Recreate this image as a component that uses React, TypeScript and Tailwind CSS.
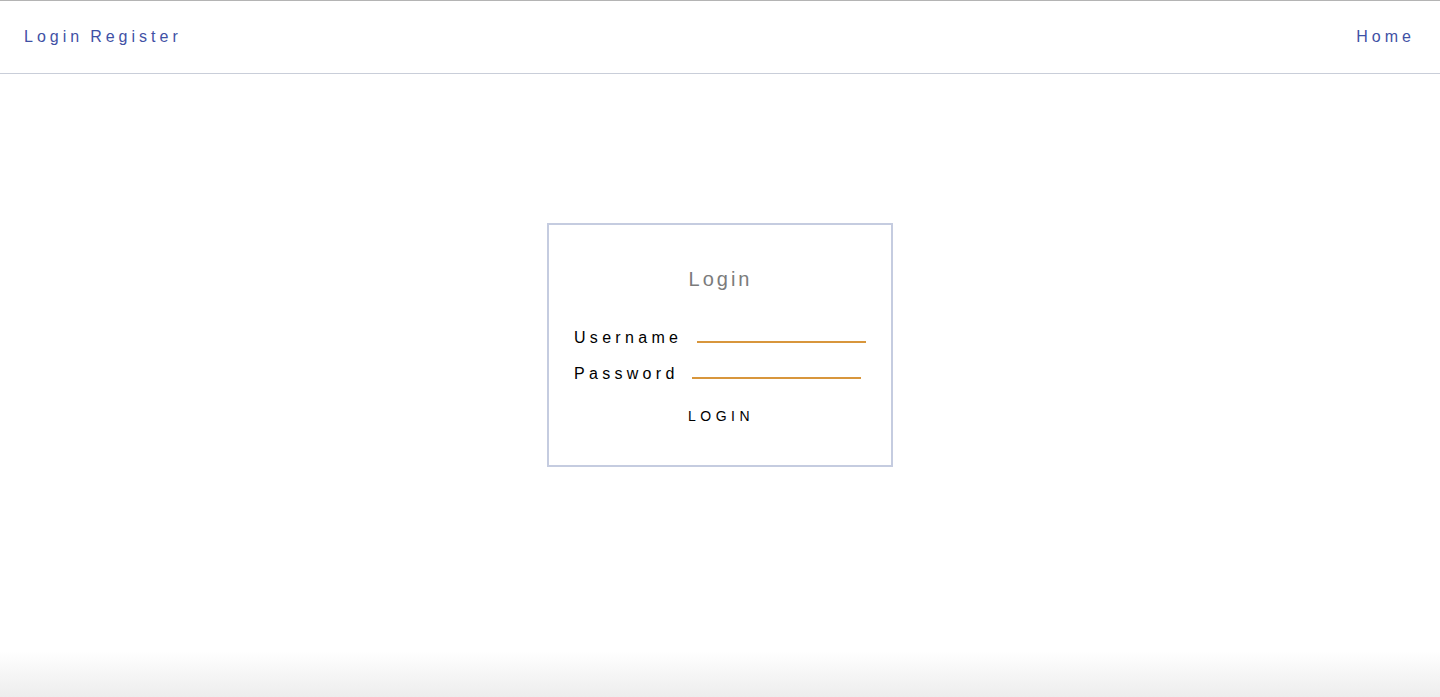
import React from 'react';

export default function App() {
  return (
    <div className="min-h-screen flex flex-col bg-white font-['Liberation_Sans',Arial,sans-serif] border-t border-[#b4b4b4]">
      {/* Top nav */}
      <header className="h-[73px] flex items-center justify-between pl-6 pr-[25px] border-b border-[#c9ced9]">
        <div className="flex gap-[7px] text-[16px] tracking-[4px] text-[#3f51a5]">
          <a href="#">Login</a>
          <a href="#">Register</a>
        </div>
        <a href="#" className="text-[16px] tracking-[4px] text-[#3f51a5]">
          Home
        </a>
      </header>

      {/* Login card */}
      <main className="flex-1 flex justify-center pt-[149px]">
        <div className="w-[346px] h-[244px] border-2 border-[#c5cce0] px-[25px] pt-[39px]">
          <h2 className="text-center text-[20px] tracking-[3px] text-[#7b7b7b] ml-[1px]">Login</h2>

          <form className="mt-[32px] flex flex-col gap-[12px]">
            <label className="flex items-center text-[16px] tracking-[4.3px] text-black">
              Username
              <input type="text" className="ml-[15px] w-[169px] h-[10px] border-b-2 border-[#d8963c] outline-none" />
            </label>
            <label className="flex items-center text-[16px] tracking-[4.3px] text-black">
              Password
              <input type="password" className="ml-[13px] w-[169px] h-[10px] border-b-2 border-[#d8963c] outline-none" />
            </label>
            <button type="button" className="mt-[8px] self-center text-[14px] tracking-[4.5px] text-black ml-[2px]">
              LOGIN
            </button>
          </form>
        </div>
      </main>

      {/* window shadow at the bottom */}
      <div className="h-[46px] bg-gradient-to-b from-white to-[#ededed]" />
    </div>
  );
}
